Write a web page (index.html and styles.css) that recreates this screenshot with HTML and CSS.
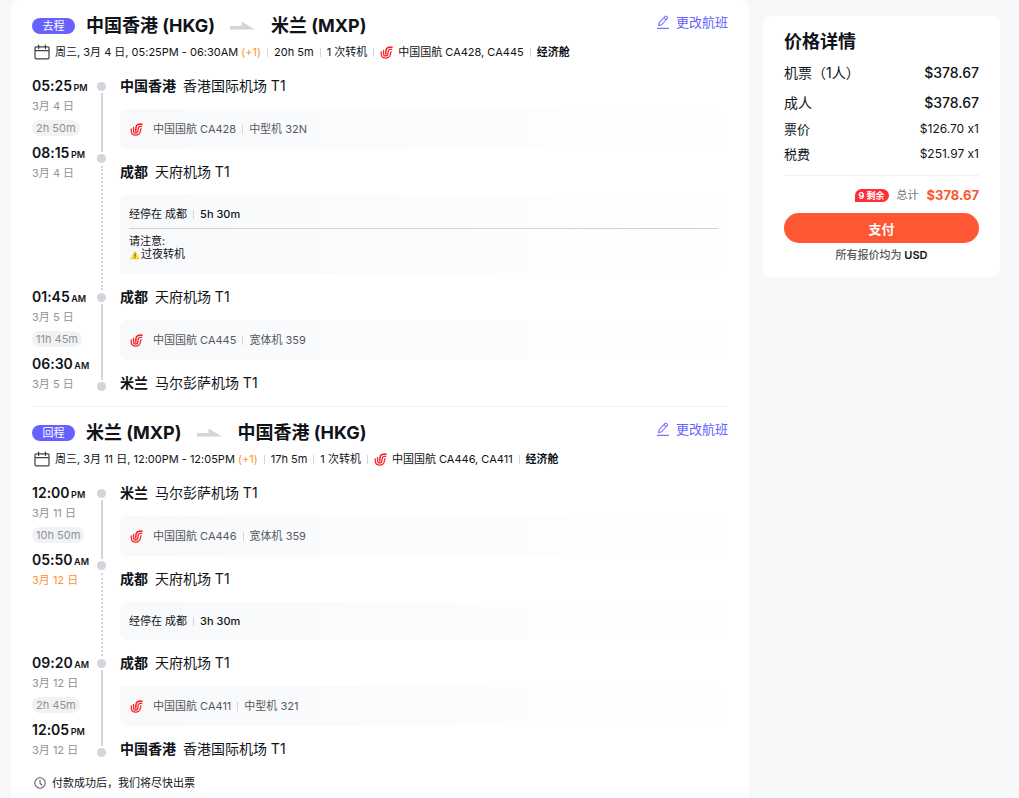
FILE: index.html
```html
<!DOCTYPE html>
<html lang="zh-CN">
<head>
    <meta charset="UTF-8">
    <meta name="viewport" content="width=device-width, initial-scale=1.0">
    <title>航班详情</title>
    <link rel="stylesheet" href="styles.css">
</head>
<body>
    <!-- Shared icons -->
    <svg class="sprite" aria-hidden="true">
        <symbol id="icon-airline" viewBox="0 0 14 14">
            <g fill="none" stroke="#fa2328" stroke-linecap="round" stroke-linejoin="round">
                <path stroke-width="1.7" d="M13 1.3C10 1 7.800 1.500 6.900 3.200 6.200 4.800 6.500 6.500 6.100 8.500"/>
                <path stroke-width="1.4" d="M12.600 3.700C10.600 3.300 9.200 3.800 8.900 5.200 8.600 7.500 9 10.200 6.800 10.700 4.700 11 3.700 9.800 3.800 8V4.800"/>
                <path stroke-width="1.4" d="M11.800 6.100C11.300 7.200 11.600 10.800 9.200 12.200 7.200 13.500 3.800 13.300 2.200 11.600 1 10.300 1.300 8.200 1.400 6.400"/>
            </g>
        </symbol>
        <symbol id="icon-calendar" viewBox="0 0 16 16">
            <path fill="none" stroke="#3c4046" stroke-width="1.2" stroke-linecap="round" stroke-linejoin="round" d="M2 2.8h12a1 1 0 0 1 1 1v10a1 1 0 0 1-1 1H2a1 1 0 0 1-1-1v-10a1 1 0 0 1 1-1zM1 6.6h14M4.6 1v3.4M11.4 1v3.4"/>
        </symbol>
        <symbol id="icon-arrow" viewBox="0 0 26 10">
            <path fill="#d3d4dc" d="M0 5h11.500V0.500L25 8.500H0z"/>
        </symbol>
        <symbol id="icon-edit" viewBox="0 0 14 14">
            <path fill="none" stroke="#7b76ff" stroke-width="1.1" stroke-linejoin="round" d="M2.600 10.600l.7-3L9.100 1.300a1 1 0 0 1 1.400 0l.8.800a1 1 0 0 1 0 1.400L5.500 9.800zM8 2.600l2.200 2.200M1 13.400h12"/>
        </symbol>
        <symbol id="icon-clock" viewBox="0 0 12 12">
            <path fill="none" stroke="#5c6066" stroke-width="1.1" stroke-linecap="round" d="M6 .8a5.200 5.200 0 1 1 0 10.400A5.200 5.200 0 0 1 6 .8zM6 3v3.200l1.800 1.800"/>
        </symbol>
        <symbol id="icon-warning" viewBox="0 0 12 12">
            <path fill="#fdd835" d="M6 1.200L11.300 10.800H.7z" stroke="#fdd835" stroke-linejoin="round"/>
            <path fill="#3c3c3c" d="M5.300 4.300h1.400L6.400 8H5.600zM5.400 8.700h1.200v1.200H5.400z"/>
        </symbol>
    </svg>

    <div class="page">
        <main class="panel">
            <section class="leg">
                <header class="leg-header">
                    <span class="badge">去程</span>
                    <h2 class="route">中国香港 (HKG) <svg class="arrow"><use href="#icon-arrow"/></svg> 米兰 (MXP)</h2>
                    <a class="change" href="#"><svg><use href="#icon-edit"/></svg>更改航班</a>
                </header>
                <div class="summary">
                    <svg class="calendar"><use href="#icon-calendar"/></svg>
                    <span>周三, 3月 4 日, 05:25PM - 06:30AM <em>(+1)</em></span>
                    <i class="sep"></i>
                    <span>20h 5m</span>
                    <i class="sep"></i>
                    <span>1 次转机</span>
                    <i class="sep"></i>
                    <svg class="airline"><use href="#icon-airline"/></svg>
                    <span>中国国航 CA428, CA445</span>
                    <i class="sep"></i>
                    <strong>经济舱</strong>
                </div>

                <div class="timeline">
                    <div class="segment">
                        <div class="times">
                            <p class="time">05:25 <small>PM</small></p>
                            <p class="date">3月 4 日</p>
                            <span class="duration">2h 50m</span>
                            <p class="time">08:15 <small>PM</small></p>
                            <p class="date">3月 4 日</p>
                        </div>
                        <div class="rail"><i class="dot"></i><i class="line"></i><i class="dot"></i></div>
                        <div class="stops">
                            <p class="airport"><strong>中国香港</strong> 香港国际机场 T1</p>
                            <div class="flight">
                                <svg class="airline"><use href="#icon-airline"/></svg>
                                <span>中国国航 CA428</span>
                                <i class="sep"></i>
                                <span>中型机 32N</span>
                            </div>
                            <p class="airport"><strong>成都</strong> 天府机场 T1</p>
                        </div>
                    </div>
                    <div class="segment">
                        <div class="times"></div>
                        <div class="rail transfer"><i class="dotted"></i></div>
                        <div class="layover">
                            <div class="layover-info">
                                <span>经停在 成都</span>
                                <i class="sep"></i>
                                <b>5h 30m</b>
                            </div>
                            <div class="notice">
                                <p>请注意:</p>
                                <p><svg class="warning"><use href="#icon-warning"/></svg>过夜转机</p>
                            </div>
                        </div>
                    </div>
                    <div class="segment">
                        <div class="times">
                            <p class="time">01:45 <small>AM</small></p>
                            <p class="date">3月 5 日</p>
                            <span class="duration">11h 45m</span>
                            <p class="time">06:30 <small>AM</small></p>
                            <p class="date">3月 5 日</p>
                        </div>
                        <div class="rail last"><i class="dot"></i><i class="line"></i><i class="dot"></i></div>
                        <div class="stops">
                            <p class="airport"><strong>成都</strong> 天府机场 T1</p>
                            <div class="flight">
                                <svg class="airline"><use href="#icon-airline"/></svg>
                                <span>中国国航 CA445</span>
                                <i class="sep"></i>
                                <span>宽体机 359</span>
                            </div>
                            <p class="airport"><strong>米兰</strong> 马尔彭萨机场 T1</p>
                        </div>
                    </div>
                </div>
            </section>

            <section class="leg">
                <header class="leg-header">
                    <span class="badge">回程</span>
                    <h2 class="route">米兰 (MXP) <svg class="arrow"><use href="#icon-arrow"/></svg> 中国香港 (HKG)</h2>
                    <a class="change" href="#"><svg><use href="#icon-edit"/></svg>更改航班</a>
                </header>
                <div class="summary">
                    <svg class="calendar"><use href="#icon-calendar"/></svg>
                    <span>周三, 3月 11 日, 12:00PM - 12:05PM <em>(+1)</em></span>
                    <i class="sep"></i>
                    <span>17h 5m</span>
                    <i class="sep"></i>
                    <span>1 次转机</span>
                    <i class="sep"></i>
                    <svg class="airline"><use href="#icon-airline"/></svg>
                    <span>中国国航 CA446, CA411</span>
                    <i class="sep"></i>
                    <strong>经济舱</strong>
                </div>

                <div class="timeline">
                    <div class="segment">
                        <div class="times">
                            <p class="time">12:00 <small>PM</small></p>
                            <p class="date">3月 11 日</p>
                            <span class="duration">10h 50m</span>
                            <p class="time">05:50 <small>AM</small></p>
                            <p class="date next-day">3月 12 日</p>
                        </div>
                        <div class="rail"><i class="dot"></i><i class="line"></i><i class="dot"></i></div>
                        <div class="stops">
                            <p class="airport"><strong>米兰</strong> 马尔彭萨机场 T1</p>
                            <div class="flight">
                                <svg class="airline"><use href="#icon-airline"/></svg>
                                <span>中国国航 CA446</span>
                                <i class="sep"></i>
                                <span>宽体机 359</span>
                            </div>
                            <p class="airport"><strong>成都</strong> 天府机场 T1</p>
                        </div>
                    </div>
                    <div class="segment">
                        <div class="times"></div>
                        <div class="rail transfer"><i class="dotted"></i></div>
                        <div class="layover">
                            <div class="layover-info">
                                <span>经停在 成都</span>
                                <i class="sep"></i>
                                <b>3h 30m</b>
                            </div>
                        </div>
                    </div>
                    <div class="segment">
                        <div class="times">
                            <p class="time">09:20 <small>AM</small></p>
                            <p class="date">3月 12 日</p>
                            <span class="duration">2h 45m</span>
                            <p class="time">12:05 <small>PM</small></p>
                            <p class="date">3月 12 日</p>
                        </div>
                        <div class="rail last"><i class="dot"></i><i class="line"></i><i class="dot"></i></div>
                        <div class="stops">
                            <p class="airport"><strong>成都</strong> 天府机场 T1</p>
                            <div class="flight">
                                <svg class="airline"><use href="#icon-airline"/></svg>
                                <span>中国国航 CA411</span>
                                <i class="sep"></i>
                                <span>中型机 321</span>
                            </div>
                            <p class="airport"><strong>中国香港</strong> 香港国际机场 T1</p>
                        </div>
                    </div>
                </div>
            </section>

            <p class="ticketing"><svg><use href="#icon-clock"/></svg>付款成功后，我们将尽快出票</p>
        </main>

        <aside class="price">
            <h2>价格详情</h2>
            <div class="price-row main"><span>机票（1人）</span><b>$378.67</b></div>
            <div class="price-row main adult"><span>成人</span><b>$378.67</b></div>
            <div class="price-row"><span>票价</span><span class="amount">$126.70 x1</span></div>
            <div class="price-row"><span>税费</span><span class="amount">$251.97 x1</span></div>
            <div class="total">
                <span class="seats">9 剩余</span>
                <span class="total-label">总计</span>
                <strong>$378.67</strong>
            </div>
            <button class="pay" type="button">支付</button>
            <p class="currency">所有报价均为 <b>USD</b></p>
        </aside>
    </div>
</body>
</html>
```
FILE: styles.css
```css
* {
    box-sizing: border-box;
}

body {
    margin: 0;
    background-color: #f7f8fa;
    color: #101318;
    font-family: Inter, "Noto Sans CJK SC", sans-serif;
    font-size: 11px;
    font-feature-settings: "calt" 0;
    line-height: 18px;
}

h2, p {
    margin: 0;
}

svg {
    flex: none;
}

.sprite {
    display: none;
}

.page {
    display: grid;
    grid-template-columns: minmax(0, 1fr) 237px;
    gap: 14px;
    align-items: start;
    padding: 0 19px 0 11px;
}

.panel {
    min-height: 100vh;
    padding: 0 21px 6px;
    background: #fff;
    border-radius: 8px 8px 0 0;
}

.leg {
    padding: 12px 0;
}

.leg + .leg {
    padding-bottom: 0;
    border-top: 1px solid #f0f1f3;
}

/* Leg header */
.leg-header {
    display: flex;
    align-items: center;
    height: 28px;
}

.badge {
    width: 43px;
    height: 16px;
    margin-right: 11px;
    border-radius: 8px;
    background: #6661ff;
    color: #fff;
    line-height: 16px;
    text-align: center;
}

.route {
    display: flex;
    align-items: center;
    gap: 15px;
    font-size: 18px;
    font-weight: 700;
    line-height: 28px;
}

.arrow {
    width: 26px;
    height: 10px;
}

.change {
    display: flex;
    align-items: center;
    align-self: flex-start;
    gap: 6px;
    margin-left: auto;
    color: #6661ff;
    font-size: 13px;
    line-height: 20px;
    text-decoration: none;
}

.change svg {
    width: 14px;
    height: 14px;
}

.summary {
    display: flex;
    align-items: center;
    margin-top: 3px;
    white-space: nowrap;
}

.summary em {
    color: #ff9233;
    font-style: normal;
}

.calendar {
    width: 16px;
    height: 16px;
    margin: 0 5px 0 2px;
}

.airline {
    width: 13px;
    height: 13px;
    margin-right: 5px;
}

.sep {
    width: 1px;
    height: 9px;
    margin: 0 6px;
    background: #d3d4dc;
}

/* Timeline */
.timeline {
    display: flex;
    flex-direction: column;
    gap: 12px;
    margin-top: 14px;
}

.segment {
    display: grid;
    grid-template-columns: 65px 9px minmax(0, 1fr);
}

.time {
    font-size: 14px;
    font-weight: 600;
    line-height: 22px;
    white-space: nowrap;
}

.time small {
    margin-left: -2px;
    font-size: 9px;
    line-height: 1;
}

.date {
    color: #8f9298;
}

.date.next-day {
    color: #ff9233;
}

.duration {
    display: block;
    width: max-content;
    height: 16px;
    margin: 5px 0 6px;
    padding: 0 4px;
    border-radius: 8px;
    background: #f1f2f4;
    color: #8f9298;
    line-height: 16px;
}

.rail {
    display: flex;
    flex-direction: column;
    align-items: center;
    gap: 2px;
    padding: 7px 0 20px;
}

.rail.last {
    padding-bottom: 3px;
}

.dot {
    width: 9px;
    height: 9px;
    border-radius: 50%;
    background: #d3d4dc;
}

.line {
    flex: 1;
    width: 2px;
    background: #d3d4dc;
}

/* reaches up and down to the dots of the neighbouring segments */
.rail.transfer {
    margin: -29px 0 -16px;
    padding: 0;
}

.dotted {
    flex: 1;
    border-left: 2px dotted #d3d4dc;
}

.stops,
.layover {
    margin-left: 14px;
}

.airport {
    font-size: 14px;
    line-height: 22px;
}

.airport strong {
    margin-right: 3px;
    font-weight: 600;
}

.flight,
.layover {
    border-radius: 6px;
    background: linear-gradient(90deg, #f8f9fb, #fff);
}

.flight {
    display: flex;
    align-items: center;
    height: 40px;
    margin: 12px 0;
    padding: 0 10px;
    color: #55595f;
}

.flight .airline {
    margin-right: 10px;
}

.layover {
    padding: 0 10px 0 9px;
}

.layover-info {
    display: flex;
    align-items: center;
    padding: 10px 0;
}

.layover-info b {
    font-weight: 500;
}

.notice {
    margin-top: -5px;
    padding: 6px 0 13px;
    border-top: 1px solid #d0d1d3;
    line-height: 13px;
}

.notice p {
    display: flex;
    align-items: center;
}

.warning {
    width: 10px;
    height: 10px;
    margin: 0 1px;
}

.ticketing {
    display: flex;
    align-items: center;
    gap: 6px;
    margin-top: 14px;
    padding-left: 2px;
}

.ticketing svg {
    width: 12px;
    height: 12px;
}

/* Price card */
.price {
    margin-top: 16px;
    padding: 14px 21px 13px;
    background: #fff;
    border-radius: 8px;
}

.price h2 {
    margin-bottom: 8px;
    font-size: 18px;
    line-height: 24px;
}

.price-row {
    display: flex;
    justify-content: space-between;
    margin-top: 5px;
    font-size: 13px;
    line-height: 20px;
}

.price-row.main {
    margin-top: 0;
    font-size: 14px;
    line-height: 22px;
}

.price-row.adult {
    margin-top: 8px;
}

.price-row b {
    font-weight: 500;
}

.amount {
    font-size: 12px;
}

.total {
    display: flex;
    align-items: center;
    justify-content: flex-end;
    gap: 8px;
    margin-top: 11px;
    padding: 10px 0 9px;
    border-top: 1px solid #f0f1f3;
}

.seats {
    height: 13px;
    padding: 0 4px;
    border-radius: 7px 7px 7px 0;
    background: #ff2d37;
    color: #fff;
    font-size: 9px;
    font-weight: 700;
    line-height: 13px;
}

.total-label {
    color: #6d7076;
}

.total strong {
    color: #ff5430;
    font-size: 13px;
}

.pay {
    display: block;
    width: 100%;
    height: 30px;
    border: 0;
    border-radius: 15px;
    background: #ff5633;
    color: #fff;
    font-family: inherit;
    font-size: 13px;
    font-weight: 700;
    cursor: pointer;
}

.currency {
    margin-top: 3px;
    color: #55595f;
    font-weight: 500;
    text-align: center;
}

.currency b {
    color: #101318;
    font-weight: 600;
}
```
